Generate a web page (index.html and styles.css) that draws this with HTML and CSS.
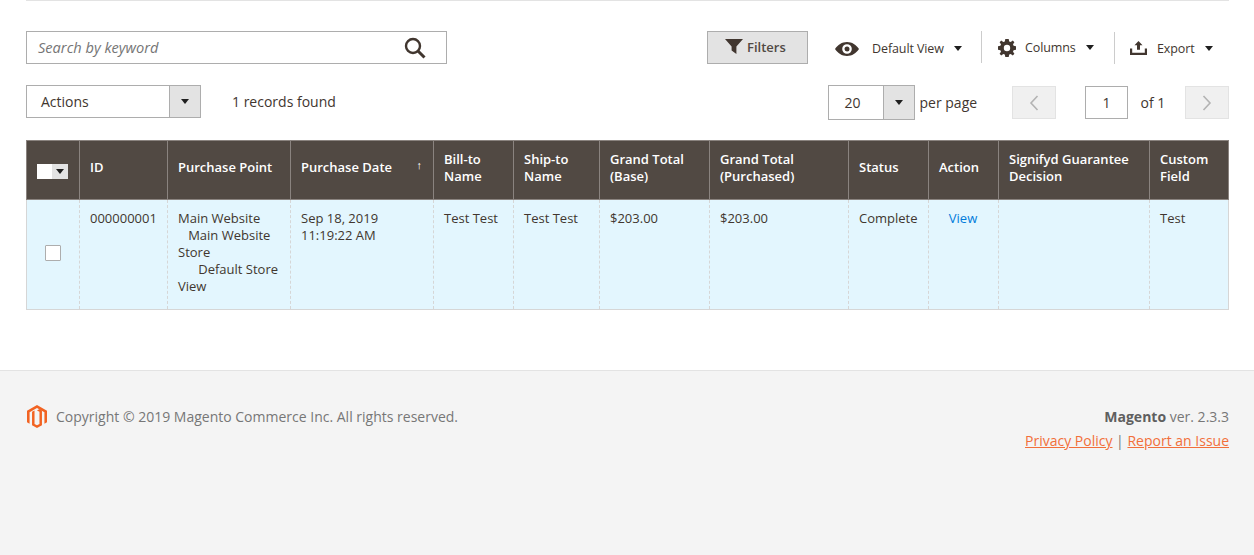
FILE: index.html
```html
<!DOCTYPE html>
<html lang="en">
<head>
  <meta charset="UTF-8" />
  <meta name="viewport" content="width=device-width, initial-scale=1.0" />
  <title>Orders</title>
  <link rel="stylesheet" href="styles.css">
</head>
<body>
  <main class="content">
    <div class="toolbar">
      <div class="search">
        <span class="search-text">Search by keyword</span>
        <svg class="search-icon" width="22" height="22" viewBox="0 0 22 22"><circle cx="9" cy="9" r="7" fill="none" stroke="#41362f" stroke-width="2.4"/><path d="M14 14l6.5 6.5" stroke="#41362f" stroke-width="3" fill="none"/></svg>
      </div>
      <div class="tools">
        <button class="filters">
          <svg width="18" height="15" viewBox="0 0 18 15"><path d="M0 0h18l-6.6 7.4V15l-4.8-3.4V7.4z" fill="#41362f"/></svg>
          Filters
        </button>
        <div class="tool tool-view">
          <svg width="24" height="14" viewBox="0 0 24 14"><path fill-rule="evenodd" d="M12 0c5 0 9.3 2.8 12 7-2.700 4.200-7 7-12 7S2.700 11.200 0 7c2.700-4.200 7-7 12-7zm0 2.200a4.800 4.800 0 100 9.600 4.800 4.800 0 000-9.600zm0 2.300a2.500 2.500 0 110 5 2.500 2.500 0 010-5z" fill="#41362f"/></svg>
          <span class="tool-label">Default View</span>
          <span class="caret"></span>
        </div>
        <div class="tool tool-columns">
          <svg class="gear" width="18" height="18" viewBox="0 0 18 18"><path fill-rule="evenodd" d="M7.3 0H10.7L11.2 2.4L12.7 3L14.8 1.6L16.4 3.2L15 5.3L15.6 6.8L18 7.3V10.7L15.6 11.2L15 12.7L16.4 14.8L14.8 16.4L12.7 15L11.2 15.6L10.7 18H7.3L6.8 15.6L5.3 15L3.2 16.4L1.6 14.8L3 12.7L2.4 11.2L0 10.7V7.3L2.4 6.8L3 5.3L1.6 3.2L3.2 1.6L5.3 3L6.8 2.4zM9 5.800a3.200 3.200 0 100 6.400 3.200 3.200 0 000-6.400z" fill="#41362f"/></svg>
          <span class="tool-label">Columns</span>
          <span class="caret"></span>
        </div>
        <div class="tool tool-export">
          <svg width="17" height="14" viewBox="0 0 17 14"><path d="M8.5 0l4 4.300h-2.500v4.400H7V4.300H4.500zM0 7.500h2.200v4.200h12.600V7.500H17V14H0z" fill="#41362f"/></svg>
          <span class="tool-label">Export</span>
          <span class="caret"></span>
        </div>
      </div>
    </div>

    <div class="pager-row">
      <div class="pager-left">
        <div class="select select-actions">
          <span class="select-value">Actions</span>
          <span class="select-btn"><span class="caret"></span></span>
        </div>
        <span class="records">1 records found</span>
      </div>
      <div class="pager-right">
        <div class="select select-size">
          <span class="select-value">20</span>
          <span class="select-btn"><span class="caret"></span></span>
        </div>
        <span class="per-page">per page</span>
        <span class="page-btn">
          <svg width="10" height="16" viewBox="0 0 10 16"><path d="M8.5 1L2 8l6.500 7" fill="none" stroke="#b3b3b3" stroke-width="1.6"/></svg>
        </span>
        <span class="page-input">1</span>
        <span class="page-of">of 1</span>
        <span class="page-btn">
          <svg width="10" height="16" viewBox="0 0 10 16"><path d="M1.5 1L8 8l-6.500 7" fill="none" stroke="#b3b3b3" stroke-width="1.6"/></svg>
        </span>
      </div>
    </div>

    <table class="grid">
      <colgroup>
        <col class="c-check"><col class="c-id"><col class="c-point"><col class="c-date"><col class="c-bill"><col class="c-ship"><col class="c-base"><col class="c-purch"><col class="c-status"><col class="c-action"><col class="c-sign"><col class="c-custom">
      </colgroup>
      <thead>
        <tr>
          <th class="th-check"><span class="multi"><span class="multi-box"></span><span class="multi-btn"><span class="caret caret-small"></span></span></span></th>
          <th>ID</th>
          <th>Purchase Point</th>
          <th class="th-sorted">Purchase Date<span class="sort-arrow">↑</span></th>
          <th>Bill-to Name</th>
          <th>Ship-to Name</th>
          <th>Grand Total (Base)</th>
          <th>Grand Total (Purchased)</th>
          <th>Status</th>
          <th>Action</th>
          <th>Signifyd Guarantee Decision</th>
          <th>Custom Field</th>
        </tr>
      </thead>
      <tbody>
        <tr>
          <td class="td-check"><span class="checkbox"></span></td>
          <td>000000001</td>
          <td>Main Website<br>&nbsp;&nbsp;&nbsp;Main Website Store<br>&nbsp;&nbsp;&nbsp;&nbsp;&nbsp;&nbsp;Default Store View</td>
          <td>Sep 18, 2019<br>11:19:22 AM</td>
          <td>Test Test</td>
          <td>Test Test</td>
          <td>$203.00</td>
          <td>$203.00</td>
          <td>Complete</td>
          <td class="td-action"><a href="#">View</a></td>
          <td></td>
          <td>Test</td>
        </tr>
      </tbody>
    </table>
  </main>

  <footer class="footer">
    <div class="copyright">
      <svg class="logo" width="20" height="23" viewBox="0 0 21 24"><path fill="#f26322" d="M10.5 0L21 6v12l-2.700 1.600V7.600l-7.800-4.500-7.800 4.500v12L0 18V6z"/><path fill="#f26322" d="M10.5 5.600l2.600-1.500 2.600 1.500v15.700L10.500 24l-5.200-2.700V7.100l2.600-1.500v14.200l2.600 1.400 2.600-1.400V7.100z"/></svg>
      <span>Copyright © 2019 Magento Commerce Inc. All rights reserved.</span>
    </div>
    <div class="legal">
      <div class="version"><strong>Magento</strong> ver. 2.3.3</div>
      <div class="links"><a href="#">Privacy Policy</a> | <a href="#">Report an Issue</a></div>
    </div>
  </footer>
</body>
</html>
```

FILE: styles.css
```css
* { box-sizing: border-box; }
html, body { height: 100%; }
body { margin: 0; display: flex; flex-direction: column; font-family: 'Open Sans', sans-serif; font-size: 14px; color: #41362f; background: #fff; overflow: hidden; }

/* Main area */
.content { margin: 0 25px 0 26px; border-top: 1px solid #e3e3e3; padding-top: 30px; padding-bottom: 60px; }

/* Search + tools */
.toolbar { display: flex; justify-content: space-between; align-items: flex-start; height: 34px; }
.search { width: 421px; height: 33px; border: 1px solid #adadad; display: flex; align-items: center; justify-content: space-between; padding: 0 20px 0 11px; }
.search-text { font-style: italic; color: #757575; font-size: 14.6px; margin-top: -2px; }
.tools { display: flex; align-items: flex-start; }
.filters { width: 101px; height: 33px; margin-right: 27px; padding: 0 0 2px 17px; display: flex; align-items: center; gap: 4px; background: #e3e3e3; border: 1px solid #adadad; font-family: inherit; font-size: 13px; font-weight: 600; color: #514943; }
.tool { display: flex; align-items: center; height: 32px; font-size: 12.5px; color: #41362f; }
.tool-label { letter-spacing: -0.1px; }
.tool-view { width: 146px; height: 33px; padding-top: 2px; }
.tool-view .tool-label { margin-left: 13px; margin-right: 10px; }
.tool-columns { width: 133px; border-left: 1px solid #ccc; padding-left: 16px; }
.tool-columns .tool-label { margin-left: 9px; margin-right: 10px; }
.gear { margin-top: 2px; }
.tool-export { width: 115px; margin-top: 1px; border-left: 1px solid #ccc; padding-left: 15px; }
.tool-export .tool-label { margin-left: 10px; margin-right: 10px; }
.caret { display: inline-block; width: 0; height: 0; border-left: 4.5px solid transparent; border-right: 4.5px solid transparent; border-top: 5px solid #1f1f1f; }
.caret-small { border-left-width: 4px; border-right-width: 4px; border-top-width: 5px; }

/* Actions + pager */
.pager-row { display: flex; justify-content: space-between; align-items: flex-start; margin-top: 20px; height: 35px; }
.pager-left, .pager-right { display: flex; align-items: center; }
.pager-left { height: 33px; }
.pager-right { height: 35px; }
.select { display: flex; border: 1px solid #adadad; background: #fff; }
.select-value { flex: 1; }
.select-btn { display: flex; align-items: center; justify-content: center; width: 31px; background: #e3e3e3; border-left: 1px solid #adadad; }
.select-actions { width: 175px; height: 33px; align-items: stretch; }
.select-actions .select-value { padding-left: 14px; line-height: 31px; }
.records { margin-left: 31px; }
.select-size { width: 87px; height: 35px; }
.select-size .select-value { padding-left: 16px; line-height: 33px; }
.per-page { margin-left: 5px; width: 92px; }
.page-btn { width: 44px; height: 33px; display: flex; align-items: center; justify-content: center; background: #f0f0f0; border: 1px solid #e3e3e3; }
.page-input { width: 43px; height: 33px; margin-left: 29px; padding-left: 1px; border: 1px solid #adadad; text-align: center; line-height: 31px; }
.page-of { margin-left: 13px; width: 44.5px; }

/* Grid */
.grid { width: 1202px; margin-top: 20px; border-collapse: collapse; table-layout: fixed; font-size: 13px; }
.c-check { width: 53px; }
.c-id { width: 88px; }
.c-point { width: 123px; }
.c-date { width: 143px; }
.c-bill { width: 80px; }
.c-ship { width: 86px; }
.c-base { width: 110px; }
.c-purch { width: 139px; }
.c-status { width: 80px; }
.c-action { width: 70px; }
.c-sign { width: 151px; }
.c-custom { width: 79px; }
.grid th { height: 59px; padding: 0 10px 5px; background: #514943; border: 1px solid #8a837f; color: #fff; font-weight: 600; text-align: left; line-height: 17px; vertical-align: middle; }
.grid .th-check { padding: 0; text-align: center; }
.th-sorted { position: relative; }
.sort-arrow { position: absolute; right: 11px; top: 15px; font-size: 11px; font-weight: 400; color: #fff; }
.multi { display: inline-flex; vertical-align: middle; margin: 1px 0 0 -1px; }
.multi-box { width: 15px; height: 15px; background: #fff; }
.multi-btn { width: 16px; height: 15px; display: flex; align-items: center; justify-content: center; background: #e3e3e3; }
.grid td { height: 110px; padding: 10px 10px 0; background: #e3f6fe; border-left: 1px dashed #d6d6d6; border-right: 1px dashed #d6d6d6; border-bottom: 1px solid #d6d6d6; vertical-align: top; line-height: 17px; color: #41362f; text-rendering: optimizeLegibility; }
.grid td:first-child { border-left: 1px solid #d6d6d6; }
.grid td:last-child { border-right: 1px solid #d6d6d6; }
.grid .td-check { padding: 0; text-align: center; vertical-align: middle; }
.checkbox { display: inline-block; width: 16px; height: 16px; margin-bottom: 4px; vertical-align: middle; background: #fff; border: 1px solid #adadad; border-radius: 1px; }
.grid .td-action { text-align: center; padding-right: 11px; }
.td-action a { color: #007bdb; text-decoration: none; }

/* Footer */
.footer { flex: 1; display: flex; justify-content: space-between; background: #f4f4f4; border-top: 1px solid #e3e3e3; padding: 34px 25px 0 26px; color: #777; }
.copyright { display: flex; align-items: flex-start; gap: 9px; height: 24px; line-height: 24px; }
.logo { margin-left: 1px; }
.legal { text-align: right; line-height: 24px; }
.version { height: 24px; }
.version strong { font-weight: 700; color: #5f5f5f; }
.links a { color: #f26f3a; }
```
